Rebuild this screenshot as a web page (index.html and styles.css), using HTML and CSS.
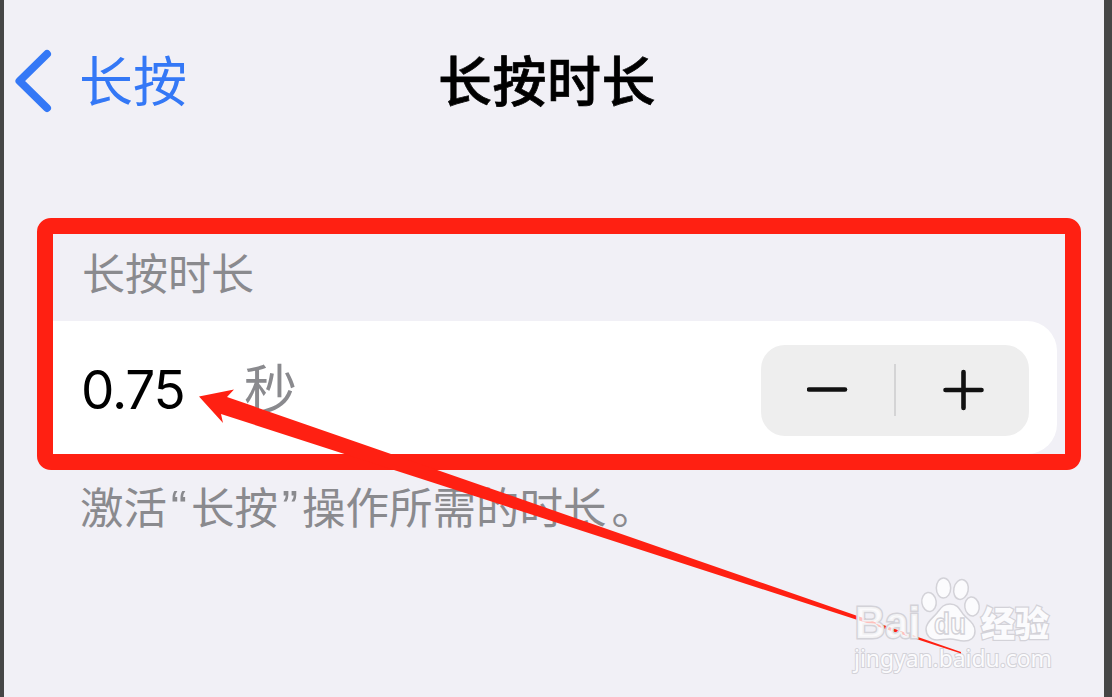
FILE: index.html
```html
<!DOCTYPE html>
<html lang="zh-CN">
<head>
    <meta charset="UTF-8">
    <meta name="viewport" content="width=device-width, initial-scale=1.0">
    <title>长按时长</title>
    <link rel="stylesheet" href="styles.css">
</head>
<body>

    <div class="screen">
        <header class="navbar">
            <a class="back">
                <svg class="chevron" width="40" height="64" viewBox="0 0 40 64">
                    <path d="M33 5 L5.500 32 L33 59" fill="none" stroke="#3478f6" stroke-width="8" stroke-linecap="round" stroke-linejoin="round"/>
                </svg>
                <span class="back-text">长按</span>
            </a>
            <h1 class="title">长按时长</h1>
        </header>

        <section class="highlight">
            <div class="label">长按时长</div>
            <div class="row">
                <span class="value">0.75</span>
                <span class="unit">秒</span>
                <div class="stepper">
                    <button class="step">
                        <svg width="42" height="42" viewBox="0 0 42 42"><path d="M2 20.5H38" stroke="#111" stroke-width="4.6" stroke-linecap="round"/></svg>
                    </button>
                    <span class="divider"></span>
                    <button class="step">
                        <svg width="42" height="42" viewBox="0 0 42 42"><path d="M3.500 21H39.500M21.500 3V39" stroke="#111" stroke-width="4.6" stroke-linecap="round"/></svg>
                    </button>
                </div>
            </div>
        </section>

        <p class="note">激活<span class="quote">“</span>长按<span class="quote">”</span>操作所需的时长<span class="stop">。</span></p>
    </div>

    <svg class="watermark" width="220" height="110" viewBox="0 0 220 110">
        <text class="url" x="4" y="92" textLength="198" lengthAdjust="spacingAndGlyphs">jingyan.baidu.com</text>
    </svg>

    <svg class="arrow" width="1112" height="697" viewBox="0 0 1112 697">
        <path d="M199 396.5L234 389.5L227 397L961 652L961 653.5L221 414L223 423Z" fill="#ff2012"/>
    </svg>

    <svg class="watermark" width="220" height="110" viewBox="0 0 220 110">
        <g class="mark">
            <text class="bai" x="5" y="63" textLength="65" lengthAdjust="spacingAndGlyphs">Bai</text>
            <ellipse cx="79" cy="27" rx="7.2" ry="9.5" transform="rotate(-8 79 27)"/>
            <ellipse cx="93.500" cy="13" rx="7.2" ry="10"/>
            <ellipse cx="111" cy="14.500" rx="7.2" ry="10" transform="rotate(12 111 14.500)"/>
            <ellipse cx="122" cy="31.500" rx="7.2" ry="9.500" transform="rotate(-8 122 31.500)"/>
            <path d="M100 29C107 29 109 33 113 39C118 45 125 48 125 56C125 63 120 66 114 66C108 66 106 64 100 64C94 64 92 65 87 65C80 65 76 60 76 54C76 47 83 43 87 38C91 33 93 29 100 29Z"/>
            <text class="du" x="84" y="59" textLength="32" lengthAdjust="spacingAndGlyphs">du</text>
            <text class="jy" x="131" y="62" textLength="68" lengthAdjust="spacingAndGlyphs">经验</text>
        </g>
    </svg>

</body>
</html>
```
FILE: styles.css
```css
* {
    margin: 0;
    padding: 0;
    box-sizing: border-box;
}

body {
    position: relative;
    width: 1112px;
    height: 697px;
    overflow: hidden;
    background: #464646;
    font-family: "Inter", "Noto Sans CJK SC", sans-serif;
}

.screen {
    width: 1100px;
    height: 697px;
    margin-left: 4px;
    background: #f1f0f6;
}

.navbar {
    display: grid;
    grid-template-columns: 1fr auto 1fr;
    align-items: center;
    height: 162px;
    padding: 0 14px 0 10px;
}

.back {
    display: flex;
    align-items: center;
    gap: 25px;
    font-size: 54px;
    line-height: 64px;
    color: #3478f6;
}

.back-text {
    padding-top: 3px;
}

.title {
    padding-top: 3px;
    margin-right: 10px;
    font-size: 54px;
    font-weight: 500;
    line-height: 64px;
    letter-spacing: 0.5px;
    color: #000;
    -webkit-text-stroke: 0.7px #000;
}

/* 红色标注框 */
.highlight {
    width: 1044px;
    height: 252px;
    margin: 56px 0 0 33px;
    border: 16px solid #ff2012;
    border-radius: 14px;
}

.label {
    height: 87px;
    padding-left: 29px;
    font-size: 43px;
    line-height: 80px;
    color: #8a8a8e;
}

.row {
    display: flex;
    align-items: center;
    width: 1004px;
    height: 133px;
    padding: 5px 28px 0 28px;
    background: #fff;
    border-radius: 0 30px 30px 0;
}

.value {
    width: 163px;
    font-size: 53px;
    letter-spacing: -1.2px;
    color: #000;
}

.unit {
    font-size: 53px;
    line-height: 64px;
    color: #8a8a8e;
}

.stepper {
    display: flex;
    align-items: center;
    width: 268px;
    height: 91px;
    margin-left: auto;
    background: #eee;
    border-radius: 24px;
}

.step {
    display: flex;
    flex: 1;
    align-items: center;
    justify-content: center;
    border: none;
    background: none;
}

.divider {
    width: 2px;
    height: 52px;
    background: #d4d4d5;
}

.note {
    padding: 6px 0 0 76px;
    font-size: 43.5px;
    line-height: 64px;
    color: #8a8a8e;
    white-space: nowrap;
}

.quote {
    display: inline-block;
    width: 24px;
    font-family: "Liberation Sans", sans-serif;
    font-size: 49px;
    line-height: 1;
    text-align: center;
}

.stop {
    padding-left: 5px;
}

.arrow {
    position: absolute;
    left: 0;
    top: 0;
}

.watermark {
    position: absolute;
    left: 850px;
    top: 575px;
}

.mark {
    fill: rgba(255, 255, 255, 0.72);
    stroke: #d3d2d8;
    stroke-width: 1.5;
    font-family: "Liberation Sans", "Noto Sans CJK SC", sans-serif;
}

/* 描边放在填充下面，字看起来更粗 */
.bai {
    font-size: 44px;
    font-weight: bold;
    stroke-width: 3;
    paint-order: stroke;
}

.du {
    font-size: 30px;
    font-weight: bold;
}

.jy {
    font-family: "Noto Sans CJK SC", sans-serif;
    font-size: 35px;
    font-weight: 900;
    stroke-width: 2.5;
    paint-order: stroke;
    fill: #fbfbfd;
}

.url {
    font-family: "Noto Sans", sans-serif;
    font-size: 23px;
    stroke: #d3d2d8;
    stroke-width: 2;
    paint-order: stroke;
    fill: #fbfbfd;
}
```
